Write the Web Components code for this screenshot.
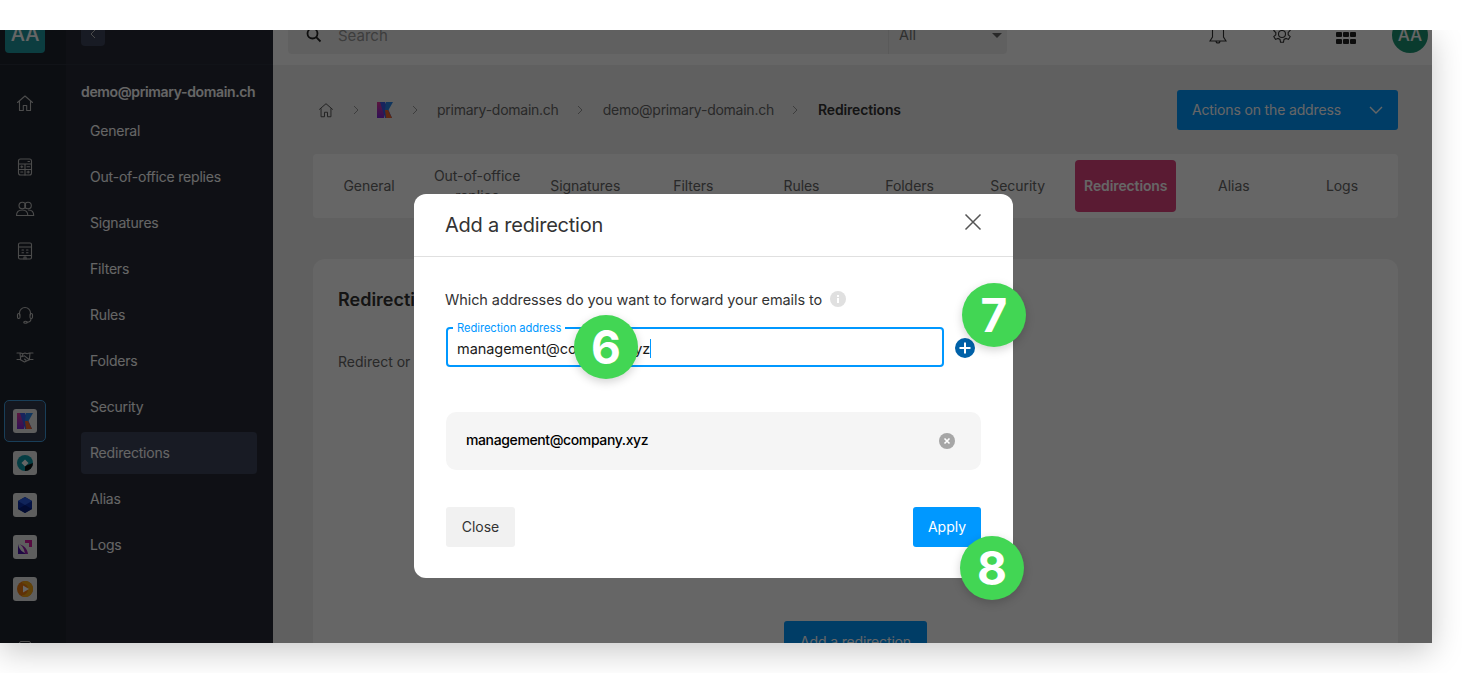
<!DOCTYPE html>
<html lang="en">
<head>
<meta charset="utf-8">
<title>Add a redirection</title>
<style>
  html, body { margin: 0; background: #fff; overflow: hidden; }
  body { font-family: 'Inter', 'Liberation Sans', sans-serif; height: 673px; }
</style>
</head>
<body>
<mail-window>
  <app-rail slot="rail"></app-rail>
  <app-sidebar slot="sidebar"></app-sidebar>
  <app-topbar slot="top"></app-topbar>
  <app-crumbs slot="main"></app-crumbs>
  <app-tabs slot="main"></app-tabs>
  <redirect-card slot="main"></redirect-card>
  <redirect-dialog slot="dialog"></redirect-dialog>
  <step-badge slot="badges" n="6" style="left:574px;top:285px"></step-badge>
  <step-badge slot="badges" n="7" style="left:962px;top:253px"></step-badge>
  <step-badge slot="badges" n="8" style="left:960px;top:506px"></step-badge>
</mail-window>

<script>
const K_LOGO = `
  <defs>
    <linearGradient id="kg" x1="0" y1="0" x2="0" y2="1">
      <stop offset="0" stop-color="#e0389a"/><stop offset="1" stop-color="#7a28d8"/>
    </linearGradient>
  </defs>
  <polygon points="0,0 7,0 7,16 0,16" fill="url(#kg)"/>
  <polygon points="3,0 8,0 15,16 8,16" fill="#3a5ae8"/>
  <polygon points="8,8 11,8 15,16 9,16" fill="#f0682c"/>
  <polygon points="9,0 16,0 11.5,8 8,8" fill="#2a86e8"/>`;

class MailWindow extends HTMLElement {
  constructor() {
    super();
    this.attachShadow({ mode: 'open' });
    this.shadowRoot.innerHTML = `
      <style>
        :host { display: block; width: 1432px; height: 613px; margin-top: 30px;
          box-shadow: 0 8px 30px rgba(0,0,0,.22); clip-path: inset(0 -40px -40px 0); }
        .clip { position: relative; width: 100%; height: 100%; overflow: hidden; }
        .app { position: relative; display: flex; height: 643px; margin-top: -30px; background: #f1f1f1; }
        .right { flex: 1; display: flex; flex-direction: column; min-width: 0; }
        .main { padding: 25px 34px 0 40px; display: flex; flex-direction: column; }
        .scrim { position: absolute; inset: 0; background: rgba(0,0,0,.6);
          padding: 194px 0 0 414px; box-sizing: border-box; }
        .badges { position: absolute; inset: 0; pointer-events: none; }
      </style>
      <div class="clip">
        <div class="app">
          <slot name="rail"></slot>
          <slot name="sidebar"></slot>
          <div class="right">
            <slot name="top"></slot>
            <div class="main"><slot name="main"></slot></div>
          </div>
          <div class="scrim"><slot name="dialog"></slot></div>
          <div class="badges"><slot name="badges"></slot></div>
        </div>
      </div>`;
  }
}

class AppRail extends HTMLElement {
  constructor() {
    super();
    this.attachShadow({ mode: 'open' });
    this.shadowRoot.innerHTML = `
      <style>
        :host { display: flex; flex-direction: column; width: 66px; flex: none; background: #20242e; height: 643px; }
        .top { height: 65px; flex: none; border-bottom: 1px solid #2c303c; box-sizing: border-box; padding: 13px 0 0 5px; }
        .aa { width: 40px; height: 40px; border-radius: 4px; background: #1f98a0; color: #fff; font: 500 20px/42px 'Inter', sans-serif; text-align: center; }
        .icons { width: 50px; display: flex; flex-direction: column; align-items: center; margin-top: 28px; }
        svg.i { width: 20px; height: 20px; fill: none; stroke: #bdbdbd; stroke-width: 1.1; display: block; stroke-linecap: round; stroke-linejoin: round; }
        .home { margin-bottom: 44px; }
        .calc { margin-bottom: 22px; }
        .users { margin-bottom: 22px; }
        .build { margin-bottom: 44px; }
        .head { margin-bottom: 22px; }
        .shake { margin-bottom: 33px; }
        .prod { width: 42px; height: 42px; box-sizing: border-box; display: flex; align-items: center; justify-content: center; border-radius: 5px; border: 1px solid transparent; }
        .prod.on { border-color: #3f9bdb; background: #343b4e; }
        .tile { width: 24px; height: 24px; border-radius: 3px; background: #eaeaea; display: flex; align-items: center; justify-content: center; }
        .tile svg { width: 16px; height: 16px; display: block; }
        .stub { width: 10px; height: 10px; margin-top: 31px; border: 1px solid #bdbdbd; border-radius: 2px; }
      </style>
      <div class="top"><div class="aa">AA</div></div>
      <div class="icons">
        <svg class="i home" viewBox="0 0 20 20"><path d="M2.5 9.5 10 3l7.500 6.500M4.500 8.200V17.500h3.800v-5h3.400v5h3.800V8.200"/></svg>
        <svg class="i calc" viewBox="0 0 20 20"><rect x="3.500" y="2" width="13" height="16" rx="2"/><path d="M3.500 7h13M3.500 12.500h13M10 7v11M13 4.500h1.500M5.800 9.700h2M5.800 15h2M12 9.700h2.500M12 15h2.500M6.800 8.700v2M13.200 14v2"/></svg>
        <svg class="i users" viewBox="0 0 20 20"><circle cx="7.300" cy="6.500" r="3.300"/><circle cx="13" cy="6.500" r="3.300"/><path d="M1.500 16.500c0-3.500 2.500-5.500 5.800-5.500s5.500 2 5.500 5.500zM13.500 11c3 0 5.200 2 5.200 5.500h-5.900"/></svg>
        <svg class="i build" viewBox="0 0 20 20"><rect x="3.500" y="2" width="13" height="16" rx="1.500"/><path d="M3.500 6h13M3.500 14.500h13M7 9h1.500M11.500 9H13M7 11.800h1.500M11.500 11.800H13M9 18v-2h2v2"/></svg>
        <svg class="i head" viewBox="0 0 20 20"><path d="M4.500 10V8a5.500 5.500 0 0 1 11 0v2"/><rect x="2.500" y="8.500" width="2.500" height="5" rx="1.200"/><rect x="15" y="8.500" width="2.500" height="5" rx="1.200"/><path d="M16 13.500c0 2.500-2 3.800-4 3.800"/><ellipse cx="10.500" cy="17.300" rx="1.800" ry="1"/></svg>
        <svg class="i shake" viewBox="0 0 20 20"><path d="M2 6h3.500l2.500.8L10 6l2 .8L14.500 6H18M2 12.500h3l4.500 2.500 1.500-.8 4-1.700h3M5 6l.6 6.500M15 6l-.6 6.500M8 7 6.500 9.800l3-1 4.500 3.700M9.500 12l1.500 1.200"/></svg>
        <div class="prod on"><div class="tile"><svg viewBox="0 0 16 16">${K_LOGO}</svg></div></div>
        <div class="prod"><div class="tile"><svg viewBox="0 0 16 16"><circle cx="8" cy="8" r="8" fill="#0d9aa8"/><path d="M16 8A8 8 0 0 1 8 16V11z" fill="#111"/><rect x="5.500" y="5.500" width="5" height="5" fill="#fff" transform="rotate(45 8 8)"/></svg></div></div>
        <div class="prod"><div class="tile"><svg viewBox="0 0 16 16"><polygon points="8,0 15,4 15,12 8,16 1,12 1,4" fill="#0b2fa8"/><polygon points="8,0 15,4 8,8 1,4" fill="#2a5be0"/><polygon points="8,8 15,12 8,16 1,12" fill="#061c78"/></svg></div></div>
        <div class="prod"><div class="tile"><svg viewBox="0 0 16 16"><path d="M1 5c1 5.500 4.500 9 10 10H1z" fill="#4a12a8"/><path d="M1 5c3 .5 6 3 7 10h3C10.500 10 7 6 1 5z" fill="#9a1db0"/><path d="M8 1h7v7h-3V4H8z" fill="#d81ca0"/></svg></div></div>
        <div class="prod"><div class="tile"><svg viewBox="0 0 16 16"><circle cx="8" cy="8" r="8" fill="#ee7a10"/><path d="M8 0a8 8 0 0 1 0 16c-2 0-3-1-3-2 3 0 6-2 6-6S8 3 5 2c0-1 1.500-2 3-2z" fill="#f5a814"/><polygon points="6,4.500 12,8 6,11.500" fill="#fff"/></svg></div></div>
        <div class="stub"></div>
      </div>`;
  }
}

class AppSidebar extends HTMLElement {
  constructor() {
    super();
    this.attachShadow({ mode: 'open' });
    const items = ['General', 'Out-of-office replies', 'Signatures', 'Filters', 'Rules', 'Folders', 'Security', 'Redirections', 'Alias', 'Logs'];
    this.shadowRoot.innerHTML = `
      <style>
        :host { display: block; width: 207px; flex: none; background: #262a36; color: #fff; font-family: 'Inter', sans-serif; letter-spacing: -.2px; }
        .top { height: 65px; box-sizing: border-box; border-bottom: 1px solid #2c303c; padding: 22px 0 0 15px; }
        .back { width: 24px; height: 24px; border-radius: 4px; background: #3d445a; display: flex; align-items: center; justify-content: center; }
        .back svg { width: 8px; height: 12px; fill: none; stroke: #bbb; stroke-width: 1; }
        h2 { margin: 0; padding: 18px 0 0 15px; font-size: 14px; font-weight: 600; letter-spacing: -.36px; line-height: 17px; height: 27px; white-space: nowrap; }
        ul { list-style: none; margin: 0; padding: 0 16px 0 15px; display: flex; flex-direction: column; gap: 4px; }
        li { height: 42px; line-height: 42px; padding-left: 9px; border-radius: 4px; font-size: 14px; }
        li.on { background: #3d445a; }
      </style>
      <div class="top"><div class="back"><svg viewBox="0 0 8 12"><path d="M6 2 2 6l4 4"/></svg></div></div>
      <h2>demo@primary-domain.ch</h2>
      <ul>${items.map(t => `<li class="${t === 'Redirections' ? 'on' : ''}">${t}</li>`).join('')}</ul>`;
  }
}

class AppTopbar extends HTMLElement {
  constructor() {
    super();
    this.attachShadow({ mode: 'open' });
    this.shadowRoot.innerHTML = `
      <style>
        :host { display: flex; align-items: flex-start; height: 65px; box-sizing: border-box; padding: 0 1px 0 15px; background: #fff; color: #333; font-family: 'Inter', sans-serif; flex: none; }
        .search { width: 719px; height: 54px; background: #f1f1f1; border-radius: 4px; display: flex; align-items: center; padding-top: 16px; box-sizing: border-box; flex: none; font-size: 14px; }
        .search > svg { width: 18px; height: 18px; margin-left: 17px; fill: none; stroke: #222; stroke-width: 1.800; flex: none; margin-top: -1px; }
        .ph { margin-left: 15px; font-size: 15px; color: #999; flex: 1; }
        .scope { width: 119px; flex: none; border-left: 1px solid #e2e2e2; padding: 0 5px 0 10px; box-sizing: border-box; height: 38px; line-height: 38px; display: flex; justify-content: space-between; align-items: center; color: #777; font-size: 14.500px; }
        .scope i { width: 0; height: 0; border: 5px solid transparent; border-top: 5px solid #666; border-bottom: 0; }
        .acts { flex: 1; display: flex; align-items: flex-start; padding-top: 24px; }
        .acts svg { display: block; fill: none; stroke: #333; stroke-width: 1.100; }
        .bell { width: 20px; height: 22px; margin-left: 201px; }
        .gear { width: 22px; height: 22px; margin: -1px 0 0 43px; }
        .grid { width: 20px; height: 12px; margin: 8px 0 0 43px; display: grid; grid-template-columns: repeat(3, 1fr); gap: 1.500px; }
        .grid b { background: #222; border-radius: 1px; }
        .av { position: absolute; left: 1392px; top: 17px; width: 36px; height: 36px; border-radius: 50%; background: #1a9573; color: #fff; font-size: 17px; font-weight: 500; line-height: 36px; text-align: center; }
      </style>
      <div class="search">
        <svg viewBox="0 0 18 18"><circle cx="7.500" cy="7.500" r="5"/><path d="m11.200 11.200 4.300 4.300"/></svg>
        <span class="ph">Search</span>
        <span class="scope">All<i></i></span>
      </div>
      <div class="acts">
        <svg class="bell" viewBox="0 0 20 22"><path d="M10 1c-3.600 0-5.500 2.500-5.500 6v6L2 17h16l-2.500-4V7c0-3.500-1.900-6-5.500-6zM8 17a2 2 0 0 0 4 0"/></svg>
        <svg class="gear" viewBox="0 0 22 22"><circle cx="11" cy="11" r="3.500"/><path d="M9.500 2h3l.5 2.800 2 1 2.500-1 1.700 2.700-2 1.900v2.400l2 1.900-1.700 2.700-2.500-1-2 1-.5 2.800h-3l-.5-2.800-2-1-2.500 1-1.700-2.700 2-1.900V9.500L2.800 7.600l1.700-2.700L7 5.800l2-1z"/></svg>
        <div class="grid"><b></b><b></b><b></b><b></b><b></b><b></b></div>
      </div>
      <div class="av">AA</div>`;
  }
}

class AppCrumbs extends HTMLElement {
  constructor() {
    super();
    this.attachShadow({ mode: 'open' });
    const sep = `<svg class="sep" viewBox="0 0 8 12"><path d="m2 2 4 4-4 4"/></svg>`;
    this.shadowRoot.innerHTML = `
      <style>
        :host { display: flex; align-items: center; height: 40px; flex: none; color: #666; font: 14px 'Inter', sans-serif; letter-spacing: -.25px; margin-bottom: 24px; }
        .home { width: 18px; height: 18px; fill: none; stroke: #555; stroke-width: 1.100; margin-left: 4px; flex: none; }
        .sep { width: 8px; height: 12px; fill: none; stroke: #999; stroke-width: 1; margin: 0 18px 0 17px; flex: none; }
        .k { width: 16px; height: 16px; flex: none; margin-left: -1px; }
        .k + .sep { margin: 0 18px 0 18px; }
        span, b { padding-bottom: 2px; }
        b { color: #333; font-weight: 600; letter-spacing: -.15px; margin-left: 1px; }
        button { margin-left: auto; width: 221px; height: 40px; border: 0; border-radius: 3px; background: #0098ff; color: #fff; font: 14px 'Inter', sans-serif; letter-spacing: -.15px; display: flex; align-items: center; justify-content: space-between; padding: 0 15px; }
        button svg { width: 14px; height: 8px; fill: none; stroke: #fff; stroke-width: 1.400; }
      </style>
      <svg class="home" viewBox="0 0 20 20"><path d="M2.500 9.500 10 3l7.500 6.500M4.500 8.200V17.500h3.800v-5h3.400v5h3.800V8.200"/></svg>
      ${sep}
      <svg class="k" viewBox="0 0 16 16">${K_LOGO}</svg>
      ${sep}
      <span>primary-domain.ch</span>
      ${sep}
      <span style="margin-left:1px">demo@primary-domain.ch</span>
      ${sep}
      <b>Redirections</b>
      <button><span>Actions on the address</span><svg viewBox="0 0 14 8"><path d="m1 1 6 6 6-6"/></svg></button>`;
  }
}

class AppTabs extends HTMLElement {
  constructor() {
    super();
    this.attachShadow({ mode: 'open' });
    const tabs = ['General', 'Out-of-office replies', 'Signatures', 'Filters', 'Rules', 'Folders', 'Security', 'Redirections', 'Alias', 'Logs'];
    this.shadowRoot.innerHTML = `
      <style>
        :host { display: grid; grid-template-columns: repeat(10, 1fr); height: 64px; box-sizing: border-box; padding: 6px 2px; background: #fff; border-radius: 4px; font: 14px/20px 'Inter', sans-serif; letter-spacing: -.05px; color: #666; flex: none; margin-bottom: 41px; }
        div { display: flex; align-items: center; justify-content: center; text-align: center; padding: 0 4px; margin: 0 3.500px; border-radius: 4px; overflow: hidden; }
        .on { background: #e0447f; color: #fff; font-weight: 600; letter-spacing: -.12px; }
      </style>
      ${tabs.map(t => `<div class="${t === 'Redirections' ? 'on' : ''}">${t}</div>`).join('')}`;
  }
}

class RedirectCard extends HTMLElement {
  constructor() {
    super();
    this.attachShadow({ mode: 'open' });
    this.shadowRoot.innerHTML = `
      <style>
        :host { display: block; height: 420px; box-sizing: border-box; padding: 30px 25px 0; background: #fff; border-radius: 12px; font-family: 'Inter', sans-serif; color: #666; flex: none; }
        h3 { margin: 0 0 41px; font-size: 18px; line-height: 22px; font-weight: 600; color: #333; }
        p { margin: 0 0 249px; font-size: 14px; line-height: 20px; }
        button { display: block; margin-left: 446px; width: 143px; height: 40px; border: 0; border-radius: 3px; background: #0098ff; color: #fff; font: 14px 'Inter', sans-serif; padding: 0; letter-spacing: -.15px; }
      </style>
      <h3>Redirections</h3>
      <p>Redirect or</p>
      <button>Add a redirection</button>`;
  }
}

class RedirectDialog extends HTMLElement {
  constructor() {
    super();
    this.attachShadow({ mode: 'open' });
    this.shadowRoot.innerHTML = `
      <style>
        :host { display: block; width: 599px; height: 384px; background: #fff; border-radius: 12px; font-family: 'Inter', sans-serif; color: #333; }
        header { height: 63px; box-sizing: border-box; border-bottom: 1px solid #e0e0e0; display: flex; align-items: center; justify-content: space-between; padding: 0 31px 0 32px; }
        h1 { margin: 0 0 0 -1px; font-size: 20px; font-weight: 400; letter-spacing: -.25px; }
        header svg { width: 18px; height: 18px; fill: none; stroke: #555; stroke-width: 1.500; margin-top: -6px; }
        .body { padding: 33px 32px 0; }
        .q { display: flex; align-items: center; gap: 8px; font-size: 14.500px; letter-spacing: -.08px; line-height: 20px; margin: 0 0 17px -1px; height: 20px; }
        .q svg { width: 16px; height: 16px; margin-top: -2px; }
        .row { display: flex; align-items: center; gap: 11px; margin-bottom: 45px; }
        .field { position: relative; width: 498px; height: 40px; box-sizing: border-box; border: 2px solid #0098ff; border-radius: 4px; display: flex; align-items: center; padding: 3px 0 0 9px; font-size: 14.500px; letter-spacing: -.05px; color: #1a1a1a; }
        .field label { position: absolute; left: 5px; top: -7px; padding: 0 4px; background: #fff; color: #0098ff; font-size: 11.200px; line-height: 13px; }
        .field span { border-right: 1px solid #0098ff; line-height: 19px; }
        .plus { width: 20px; height: 20px; flex: none; margin-top: 2px; }
        .chip { height: 58px; border-radius: 10px; background: #f5f5f5; display: flex; align-items: center; justify-content: space-between; padding: 0 26px 0 20px; font-size: 14px; font-weight: 500; letter-spacing: -.38px; color: #000; margin-bottom: 37px; }
        .chip span { padding-bottom: 3px; }
        .chip svg { width: 16px; height: 16px; }
        .foot { display: flex; justify-content: space-between; }
        button { height: 40px; border: 0; border-radius: 3px; font: 14px 'Inter', sans-serif; padding: 0 0 2px; }
        .close { width: 69px; background: #f1f1f1; color: #333; }
        .apply { width: 68px; background: #0098ff; color: #fff; }
      </style>
      <header>
        <h1>Add a redirection</h1>
        <svg viewBox="0 0 18 18"><path d="m1.500 1.500 15 15M16.500 1.500l-15 15"/></svg>
      </header>
      <div class="body">
        <div class="q">
          <span>Which addresses do you want to forward your emails to</span>
          <svg viewBox="0 0 16 16"><circle cx="8" cy="8" r="8" fill="#e0e0e0"/><rect x="7" y="7" width="2" height="5" fill="#fff"/><rect x="7" y="4" width="2" height="2" fill="#fff"/></svg>
        </div>
        <div class="row">
          <div class="field"><label>Redirection address</label><span>management@company.xyz</span></div>
          <svg class="plus" viewBox="0 0 20 20"><circle cx="10" cy="10" r="10" fill="#0061a8"/><path d="M10 4.500v11M4.500 10h11" stroke="#fff" stroke-width="2"/></svg>
        </div>
        <div class="chip">
          <span>management@company.xyz</span>
          <svg viewBox="0 0 16 16"><circle cx="8" cy="8" r="8" fill="#a6a6a6"/><path d="m5.500 5.500 5 5M10.500 5.500l-5 5" stroke="#fff" stroke-width="1.600"/></svg>
        </div>
        <div class="foot">
          <button class="close">Close</button>
          <button class="apply">Apply</button>
        </div>
      </div>`;
  }
}

class StepBadge extends HTMLElement {
  constructor() {
    super();
    this.attachShadow({ mode: 'open' });
    this.shadowRoot.innerHTML = `
      <style>
        :host { position: absolute; display: flex; align-items: center; justify-content: center; width: 64px; height: 64px; margin-top: 30px; border-radius: 50%; background: #42d654; color: #fff; font: 700 46px/1 'Inter', sans-serif; box-shadow: 0 3px 10px rgba(0,0,0,.18); }
      </style>
      <span></span>`;
  }
  connectedCallback() {
    this.shadowRoot.querySelector('span').textContent = this.getAttribute('n');
  }
}

customElements.define('mail-window', MailWindow);
customElements.define('app-rail', AppRail);
customElements.define('app-sidebar', AppSidebar);
customElements.define('app-topbar', AppTopbar);
customElements.define('app-crumbs', AppCrumbs);
customElements.define('app-tabs', AppTabs);
customElements.define('redirect-card', RedirectCard);
customElements.define('redirect-dialog', RedirectDialog);
customElements.define('step-badge', StepBadge);
</script>
</body>
</html>
